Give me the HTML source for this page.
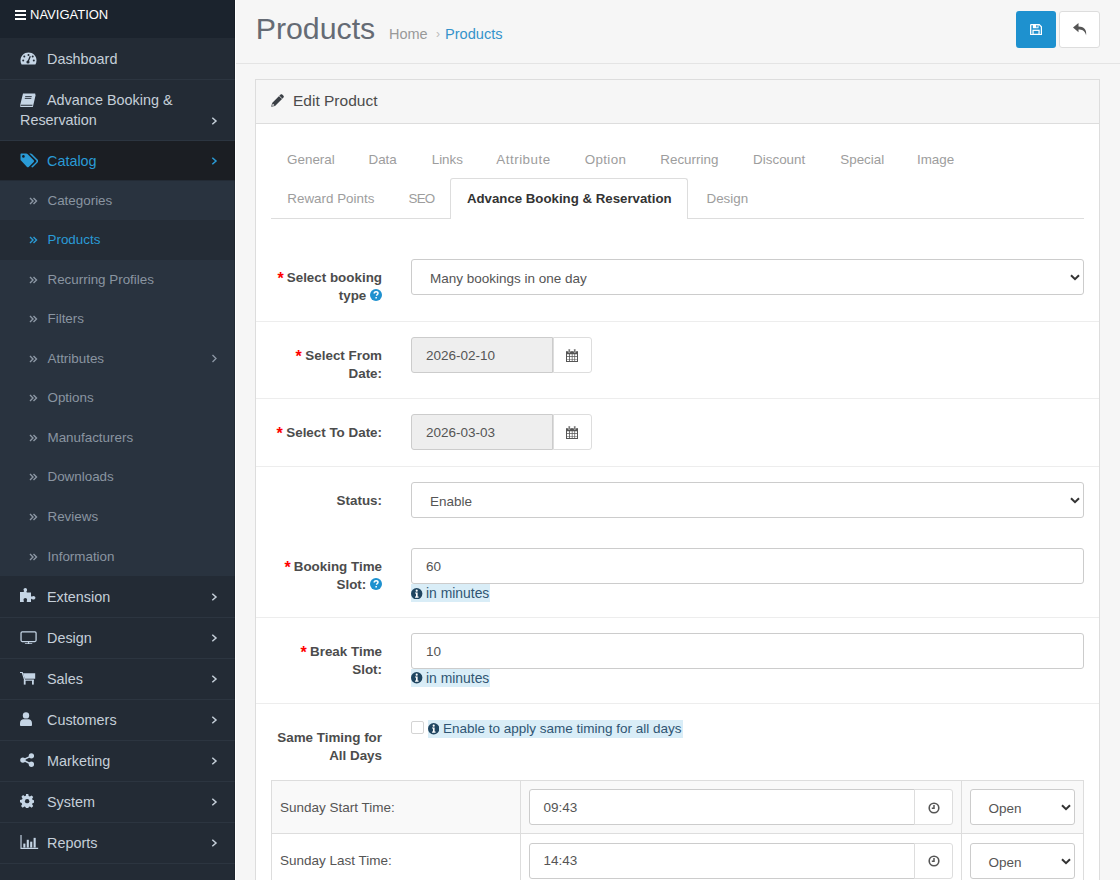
<!DOCTYPE html>
<html><head><meta charset="utf-8">
<style>
*{box-sizing:border-box;}
html,body{margin:0;padding:0;}
body{width:1120px;height:880px;overflow:hidden;background:#f6f6f6;font-family:"Liberation Sans",sans-serif;font-size:13.5px;color:#666;position:relative;}
svg{display:block;}
.ab{position:absolute;white-space:nowrap;}
.lbl{font-weight:bold;font-size:13.4px;line-height:18px;color:#4c4c4c;text-align:right;}
.req{color:#f00;display:inline-block;transform:translateY(1.5px) scale(1.2);}
.fc{position:absolute;background:#fff;border:1px solid #ccc;border-radius:3px;}
.ro{background:#eee;border-radius:3px 0 0 3px;}
.btnw{position:absolute;background:#fff;border:1px solid #ddd;border-radius:0 3px 3px 0;}
.ctl{font-size:13.5px;line-height:18px;color:#555;}
.sep{position:absolute;left:256px;width:843px;height:1px;background:#ededed;}
.hlt{line-height:18px;color:#2f5573;}
.tab{font-size:13.4px;line-height:18px;color:#9d9d9d;}
#left{position:absolute;left:0;top:0;width:235px;height:880px;background:#232b35;}
#navhead{position:absolute;left:0;top:0;width:235px;height:38px;background:#1b232d;color:#fff;font-size:13px;}
#navhead .t{position:absolute;left:30px;top:7px;line-height:16px;}
#navhead .bars{position:absolute;left:15px;top:10px;width:11px;}
#navhead .bars i{display:block;height:2px;background:#fff;margin-bottom:2px;}
.mi{position:absolute;left:0;width:235px;border-bottom:1px solid #2c3540;color:#c5cfd9;font-size:14.4px;line-height:20px;background:#232b35;}
.mi .ic{position:absolute;left:20px;}
.mi .tx{position:absolute;left:47px;top:10.8px;white-space:nowrap;}
.mi .chev{position:absolute;left:211px;}
.mi.b .tx{top:10px;}
.mi.b .chev{margin-top:-0.5px;}
.mi.act{background:#1b1e23;color:#2a9bd6;border-bottom-color:#1b1e23;}
.si{position:absolute;left:0;width:235px;height:39.57px;background:#29333f;color:#8a95a1;font-size:13.4px;line-height:18px;}
.si .tx{position:absolute;left:47.5px;top:11px;white-space:nowrap;}
.si .ic{position:absolute;left:29.3px;top:16px;}
.si .chev{position:absolute;left:211px;top:15px;}
.si.act{background:#242c36;color:#2a9bd6;}
#content{position:absolute;left:235px;top:0;width:885px;height:880px;background:#f6f6f6;border-left:1px solid #fff;}
</style></head><body>
<div id="left">
  <div id="navhead"><div class="bars"><i></i><i></i><i></i></div><div class="t">NAVIGATION</div></div>

  <div class="mi" style="top:38.3px;height:41.3px;">
    <svg class="ic" style="top:14.2px;left:19.5px" width="17" height="13" viewBox="0 0 17 13"><path d="M8.5 0.5C4 0.5 0.5 4 0.5 8.5c0 1.5.4 2.9 1.1 4h13.8c.7-1.1 1.1-2.5 1.1-4C16.5 4 13 .5 8.5.5z" fill="#c5d5e5"/><circle cx="3.2" cy="8.5" r="1" fill="#232b35"/><circle cx="4.3" cy="4.6" r="1" fill="#232b35"/><circle cx="8.5" cy="3" r="1" fill="#232b35"/><circle cx="13.8" cy="8.5" r="1" fill="#232b35"/><circle cx="12.7" cy="4.6" r="1" fill="#232b35"/><path d="M10.3 4.2L8.2 9.3" stroke="#232b35" stroke-width="1.3"/><circle cx="8" cy="10" r="1.6" fill="#232b35"/></svg>
    <div class="tx">Dashboard</div>
  </div>
  <div class="mi" style="top:79.6px;height:61.1px;">
    <svg class="ic" style="top:13.5px" width="16" height="14" viewBox="0 0 16 14"><path d="M3 0.5h12.3l-2.6 11.2H1.2c-.6 0-.9.6-.5 1h11.6l2.8-11.4.6.5-2.9 12.5H1C.2 13.8-.2 12.8.2 12L3 .5z" fill="#c5d5e5"/><path d="M3.6 1.8h10.2l-2.2 8.9H1.6z" fill="#c5d5e5"/><path d="M5.2 3.6h6.5M4.8 5.4h6.5" stroke="#232b35" stroke-width=".9"/></svg>
    <div class="tx">Advance Booking &amp;</div>
    <div class="tx" style="left:20px;top:30.4px">Reservation</div>
    <svg class="chev" style="top:37.4px" width="7" height="8" viewBox="0 0 7 8"><path d="M1.3 .8L5 4 1.3 7.2" stroke="#c5cfd9" stroke-width="1.5" fill="none"/></svg>
  </div>
  <div class="mi act" style="top:140.7px;height:39.8px;">
    <svg class="ic" style="top:12.5px" width="18" height="15" viewBox="0 0 18 15"><path d="M0.5 1.2C0.5.8.8.5 1.2.5h5.1c.4 0 .9.2 1.2.5l6.2 6.2c.5.5.5 1.2 0 1.7L8.7 13.9c-.5.5-1.2.5-1.7 0L1 7.6C.7 7.3.5 6.8.5 6.4z" fill="#2a9bd6"/><circle cx="3.4" cy="3.4" r="1.3" fill="#1b1e23"/><path d="M9.2.5h1.6c.4 0 .9.2 1.2.5l6.2 6.2c.5.5.5 1.2 0 1.7l-5.1 5.1c-.5.5-1.2.5-1.7 0l-.2-.2 4.9-4.9c.5-.5.5-1.2 0-1.7z" fill="#2a9bd6"/></svg>
    <div class="tx">Catalog</div>
    <svg class="chev" style="top:16.8px" width="7" height="8" viewBox="0 0 7 8"><path d="M1.3 .8L5 4 1.3 7.2" stroke="#2a9bd6" stroke-width="1.5" fill="none"/></svg>
  </div>
  <div class="si" style="top:180.50px"><svg class="ic" width="9" height="8" viewBox="0 0 9 8"><path d="M1 1l3 3-3 3M4.5 1l3 3-3 3" stroke="#8d98a5" stroke-width="1.4" fill="none"/></svg><div class="tx">Categories</div></div>
  <div class="si act" style="top:220.07px"><svg class="ic" width="9" height="8" viewBox="0 0 9 8"><path d="M1 1l3 3-3 3M4.5 1l3 3-3 3" stroke="#2a9bd6" stroke-width="1.4" fill="none"/></svg><div class="tx">Products</div></div>
  <div class="si" style="top:259.64px"><svg class="ic" width="9" height="8" viewBox="0 0 9 8"><path d="M1 1l3 3-3 3M4.5 1l3 3-3 3" stroke="#8d98a5" stroke-width="1.4" fill="none"/></svg><div class="tx">Recurring Profiles</div></div>
  <div class="si" style="top:299.21px"><svg class="ic" width="9" height="8" viewBox="0 0 9 8"><path d="M1 1l3 3-3 3M4.5 1l3 3-3 3" stroke="#8d98a5" stroke-width="1.4" fill="none"/></svg><div class="tx">Filters</div></div>
  <div class="si" style="top:338.78px"><svg class="ic" width="9" height="8" viewBox="0 0 9 8"><path d="M1 1l3 3-3 3M4.5 1l3 3-3 3" stroke="#8d98a5" stroke-width="1.4" fill="none"/></svg><div class="tx">Attributes</div><svg class="chev" width="7" height="9" viewBox="0 0 7 9"><path d="M1.5 1l3.5 3.5L1.5 8" stroke="#8d98a5" stroke-width="1.3" fill="none"/></svg></div>
  <div class="si" style="top:378.35px"><svg class="ic" width="9" height="8" viewBox="0 0 9 8"><path d="M1 1l3 3-3 3M4.5 1l3 3-3 3" stroke="#8d98a5" stroke-width="1.4" fill="none"/></svg><div class="tx">Options</div></div>
  <div class="si" style="top:417.92px"><svg class="ic" width="9" height="8" viewBox="0 0 9 8"><path d="M1 1l3 3-3 3M4.5 1l3 3-3 3" stroke="#8d98a5" stroke-width="1.4" fill="none"/></svg><div class="tx">Manufacturers</div></div>
  <div class="si" style="top:457.49px"><svg class="ic" width="9" height="8" viewBox="0 0 9 8"><path d="M1 1l3 3-3 3M4.5 1l3 3-3 3" stroke="#8d98a5" stroke-width="1.4" fill="none"/></svg><div class="tx">Downloads</div></div>
  <div class="si" style="top:497.06px"><svg class="ic" width="9" height="8" viewBox="0 0 9 8"><path d="M1 1l3 3-3 3M4.5 1l3 3-3 3" stroke="#8d98a5" stroke-width="1.4" fill="none"/></svg><div class="tx">Reviews</div></div>
  <div class="si" style="top:536.63px"><svg class="ic" width="9" height="8" viewBox="0 0 9 8"><path d="M1 1l3 3-3 3M4.5 1l3 3-3 3" stroke="#8d98a5" stroke-width="1.4" fill="none"/></svg><div class="tx">Information</div></div>
  <div class="mi b" style="top:577.0px;height:41px;"><svg class="ic" style="top:11.1px" width="16" height="14" viewBox="0 0 16 14"><path d="M0 4h3.5c.5 0 .8-.4.6-.9-.3-.6-.6-1-.6-1.6C3.5 1 4.3 0 5.3 0s1.8 1 1.8 1.9c0 .6-.3 1-.6 1.6-.2.5.1.9.6.9H11v3.5c0 .5.4.8.9.6.6-.3 1-.6 1.6-.6.9 0 1.9.8 1.9 1.8s-1 1.8-1.9 1.8c-.6 0-1-.3-1.6-.6-.5-.2-.9.1-.9.6V14H7.3c-.5 0-.8-.4-.6-.9.2-.4.4-.8.4-1.2 0-1-.8-1.8-1.8-1.8s-1.8.8-1.8 1.8c0 .4.2.8.4 1.2.2.5-.1.9-.6.9H0z" fill="#c5d5e5"/></svg><div class="tx">Extension</div><svg class="chev" style="top:16.8px" width="7" height="8" viewBox="0 0 7 8"><path d="M1.3 .8L5 4 1.3 7.2" stroke="#c5cfd9" stroke-width="1.5" fill="none"/></svg></div>
  <div class="mi b" style="top:618.0px;height:41px;"><svg class="ic" style="top:12.6px" width="17.5" height="13.5" viewBox="0 0 18 14"><rect x="1" y="0.9" width="15.6" height="10" rx="1.2" stroke="#c5d5e5" stroke-width="1.3" fill="none"/><path d="M8.8 11v2M5 13.3h7.6" stroke="#c5d5e5" stroke-width="1.2"/></svg><div class="tx">Design</div><svg class="chev" style="top:16.8px" width="7" height="8" viewBox="0 0 7 8"><path d="M1.3 .8L5 4 1.3 7.2" stroke="#c5cfd9" stroke-width="1.5" fill="none"/></svg></div>
  <div class="mi b" style="top:659.0px;height:41px;"><svg class="ic" style="top:13.2px" width="16" height="13" viewBox="0 0 16 13"><path d="M0 .4h2.2l2.5 7.8h9.2" stroke="#c5d5e5" stroke-width="1.2" fill="none"/><path d="M3 1.3h12.2v5.5H4.8z" fill="#c5d5e5"/><rect x="3.8" y="8" width="1.8" height="4.6" fill="#c5d5e5"/><rect x="12" y="8" width="1.8" height="4.6" fill="#c5d5e5"/></svg><div class="tx">Sales</div><svg class="chev" style="top:16.8px" width="7" height="8" viewBox="0 0 7 8"><path d="M1.3 .8L5 4 1.3 7.2" stroke="#c5cfd9" stroke-width="1.5" fill="none"/></svg></div>
  <div class="mi b" style="top:700.0px;height:41px;"><svg class="ic" style="top:12.1px" width="12" height="14" viewBox="0 0 12 14"><circle cx="6" cy="3.4" r="3.2" fill="#c5d5e5"/><path d="M0 11.2C0 8.8 1.7 7.3 3.4 7.3h5.2c1.7 0 3.4 1.5 3.4 3.9V13c0 .5-.4 1-1 1H1c-.6 0-1-.5-1-1z" fill="#c5d5e5"/></svg><div class="tx">Customers</div><svg class="chev" style="top:16.8px" width="7" height="8" viewBox="0 0 7 8"><path d="M1.3 .8L5 4 1.3 7.2" stroke="#c5cfd9" stroke-width="1.5" fill="none"/></svg></div>
  <div class="mi b" style="top:741.0px;height:41px;"><svg class="ic" style="top:11.8px" width="14.3" height="14.3" viewBox="0 0 15 15"><circle cx="12" cy="3" r="2.8" fill="#c5d5e5"/><circle cx="3" cy="7.4" r="2.8" fill="#c5d5e5"/><circle cx="12" cy="11.8" r="2.8" fill="#c5d5e5"/><path d="M12 3L3 7.4l9 4.4" stroke="#c5d5e5" stroke-width="1.6" fill="none"/></svg><div class="tx">Marketing</div><svg class="chev" style="top:16.8px" width="7" height="8" viewBox="0 0 7 8"><path d="M1.3 .8L5 4 1.3 7.2" stroke="#c5cfd9" stroke-width="1.5" fill="none"/></svg></div>
  <div class="mi b" style="top:782.0px;height:41px;"><svg class="ic" style="top:12.0px" width="14.3" height="14.3" viewBox="0 0 15 15"><path d="M6.3 0h2.4l.4 2.1 1.3.6 1.8-1.2 1.7 1.7-1.2 1.8.6 1.3 2.1.4v2.4l-2.1.4-.6 1.3 1.2 1.8-1.7 1.7-1.8-1.2-1.3.6-.4 2.1H6.3l-.4-2.1-1.3-.6-1.8 1.2-1.7-1.7 1.2-1.8-.6-1.3L0 8.7V6.3l2.1-.4.6-1.3-1.2-1.8 1.7-1.7 1.8 1.2 1.3-.6z" fill="#c5d5e5"/><circle cx="7.5" cy="7.5" r="2.3" fill="#232b35"/></svg><div class="tx">System</div><svg class="chev" style="top:16.8px" width="7" height="8" viewBox="0 0 7 8"><path d="M1.3 .8L5 4 1.3 7.2" stroke="#c5cfd9" stroke-width="1.5" fill="none"/></svg></div>
  <div class="mi b" style="top:823.0px;height:41px;"><svg class="ic" style="top:11.8px" width="19" height="14.3" viewBox="0 0 19 15"><path d="M.6 0v14.1h18" stroke="#c5d5e5" stroke-width="1.2" fill="none"/><rect x="3" y="9" width="2.2" height="4.2" fill="#c5d5e5"/><rect x="6.6" y="5" width="2.2" height="8.2" fill="#c5d5e5"/><rect x="10.2" y="7" width="2.2" height="6.2" fill="#c5d5e5"/><rect x="13.8" y="3" width="2.2" height="10.2" fill="#c5d5e5"/></svg><div class="tx">Reports</div><svg class="chev" style="top:16.8px" width="7" height="8" viewBox="0 0 7 8"><path d="M1.3 .8L5 4 1.3 7.2" stroke="#c5cfd9" stroke-width="1.5" fill="none"/></svg></div>
</div>
<div id="hdrline" style="position:absolute;left:236px;top:63px;width:884px;height:1px;background:#e4e4e4"></div>
<div style="position:absolute;left:235px;top:0;width:1px;height:880px;background:#fff"></div>
<div style="position:absolute;left:234px;top:0;width:1px;height:880px;background:rgba(0,0,0,0.15)"></div>
<div class="ab" style="left:255.7px;top:12px;font-size:30.3px;line-height:34px;color:#656b74">Products</div>
<div class="ab" style="left:389px;top:25px;font-size:14.5px;line-height:18px;color:#999">Home</div>
<div class="ab" style="left:436px;top:25px;font-size:12px;line-height:18px;color:#bbb">›</div>
<div class="ab" style="left:445px;top:25px;font-size:14.6px;line-height:18px;color:#3593cb">Products</div>
<div class="ab" style="left:1016px;top:11px;width:40px;height:36.6px;background:#1e91cf;border-radius:3px;">
  <svg style="position:absolute;left:13.5px;top:12.6px" width="12.3" height="11.3" viewBox="0 0 13 12"><path d="M1.2.7h8.6l2.3 2.3v7.7c0 .4-.3.7-.7.7H1.2c-.3 0-.5-.3-.5-.6V1.3c0-.3.2-.6.5-.6z" stroke="#fff" stroke-width="1.4" fill="none"/><rect x="3" y="0.5" width="6" height="4" fill="#fff"/><rect x="6.6" y="1.2" width="1.4" height="2.4" fill="#1e91cf"/><rect x="3.2" y="6.7" width="6.4" height="4.3" stroke="#fff" stroke-width="1.3" fill="none"/></svg>
</div>
<div class="ab" style="left:1059px;top:11px;width:41px;height:36.6px;background:#fff;border:1px solid #ddd;border-radius:3px;">
  <svg style="position:absolute;left:12.5px;top:11px" width="14" height="13" viewBox="0 0 14 13"><path d="M5.5 0L0 4.6l5.5 4.6V6.4c3.4 0 6.2.6 7.6 5.8.9-5.8-2.4-8.8-7.6-8.8z" fill="#555"/></svg>
</div>
<div id="panel" style="position:absolute;left:255px;top:79px;width:845px;height:820px;border:1px solid #ddd;background:#fff;">
  <div style="position:absolute;left:0;top:0;width:843px;height:43.5px;background:#f6f6f6;border-bottom:1px solid #ddd"></div>
</div>
<svg style="position:absolute;left:271px;top:94.3px" width="13" height="13" viewBox="0 0 13 13"><path d="M9.6.5c.5-.5 1.1-.5 1.6 0l1.3 1.3c.5.5.5 1.1 0 1.6L4 11.9.2 12.8l.9-3.8z" fill="#3a3f45"/><path d="M8.2 1.9l2.9 2.9" stroke="#f6f6f6" stroke-width=".8"/><path d="M1.7 9.5l1.8 1.8-2.3.6z" fill="#f6f6f6"/></svg>
<div class="ab" style="left:293px;top:92px;font-size:15.5px;line-height:18px;color:#4c4c4c">Edit Product</div>
<div style="position:absolute;left:271px;top:218px;width:813px;height:1px;background:#ddd"></div>
<div style="position:absolute;left:450px;top:178px;width:238px;height:41px;background:#fff;border:1px solid #ddd;border-bottom:none;border-radius:3px 3px 0 0"></div>
<div class="ab tab" style="left:287.1px;top:150.8px">General</div>
<div class="ab tab" style="left:368.5px;top:150.8px">Data</div>
<div class="ab tab" style="left:431.7px;top:150.8px">Links</div>
<div class="ab tab" style="left:496.3px;top:150.8px;letter-spacing:0.5px">Attribute</div>
<div class="ab tab" style="left:584.7px;top:150.8px;letter-spacing:0.35px">Option</div>
<div class="ab tab" style="left:660.3px;top:150.8px">Recurring</div>
<div class="ab tab" style="left:753.1px;top:150.8px">Discount</div>
<div class="ab tab" style="left:840.3px;top:150.8px">Special</div>
<div class="ab tab" style="left:917.0px;top:150.8px">Image</div>
<div class="ab tab" style="left:287.3px;top:189.8px">Reward Points</div>
<div class="ab tab" style="left:408.6px;top:189.8px;letter-spacing:-0.9px">SEO</div>
<div class="ab tab" style="left:706.5px;top:189.8px">Design</div>
<div class="ab tab" style="left:466.9px;top:189.8px;color:#333;font-weight:bold;font-size:13.25px">Advance Booking &amp; Reservation</div>
<div class="ab lbl" style="right:738px;top:269px"><span class="req">*</span> Select booking</div>
<div class="ab lbl" style="right:738px;top:287px">type <svg width="12" height="12" viewBox="0 0 12 12" style="display:inline-block;vertical-align:-1px"><circle cx="6" cy="6" r="6" fill="#1e91cf"/><path d="M4.2 4.5c0-1.1.8-1.8 1.9-1.8s1.9.7 1.9 1.6c0 1.2-1.4 1.3-1.4 2.4" stroke="#fff" stroke-width="1.5" fill="none"/><rect x="5.4" y="8" width="1.5" height="1.5" fill="#fff"/></svg></div>
<div class="fc" style="left:411px;top:259px;width:673px;height:36px;"><div class="ab ctl" style="left:18px;top:10px">Many bookings in one day</div><div class="ab" style="right:3.5px;top:14px"><svg width="10" height="7" viewBox="0 0 10 7"><path d="M1 1.2l4 4 4-4" stroke="#333" stroke-width="2" fill="none"/></svg></div></div>
<div class="sep" style="top:321px"></div>
<div class="ab lbl" style="right:738px;top:347px"><span class="req">*</span> Select From</div>
<div class="ab lbl" style="right:738px;top:365px">Date:</div>
<div class="fc ro" style="left:411px;top:337px;width:142px;height:36px;"><div class="ab ctl" style="left:14px;top:9px">2026-02-10</div></div>
<div class="btnw" style="left:552.5px;top:337px;width:39.5px;height:36px;"><div class="ab" style="left:12.6px;top:11.3px"><svg width="12" height="13" viewBox="0 0 12 13"><rect x="0" y="2.2" width="12" height="10.8" fill="#555"/><path d="M1 5.3h2.1v2h-2.1zM3.9 5.3h1.9v2H3.9zM6.5 5.3h1.9v2H6.5zM9.1 5.3H11v2H9.1zM1 8h2.1v1.9H1zM3.9 8h1.9v1.9H3.9zM6.5 8h1.9v1.9H6.5zM9.1 8H11v1.9H9.1zM1 10.6h2.1V12H1zM3.9 10.6h1.9V12H3.9zM6.5 10.6h1.9V12H6.5zM9.1 10.6H11V12H9.1z" fill="#fff"/><rect x="2.3" y="0" width="1.8" height="3.4" rx=".5" fill="#555" stroke="#fff" stroke-width=".5"/><rect x="7.9" y="0" width="1.8" height="3.4" rx=".5" fill="#555" stroke="#fff" stroke-width=".5"/></svg></div></div>
<div class="sep" style="top:398px"></div>
<div class="ab lbl" style="right:738px;top:424px"><span class="req">*</span> Select To Date:</div>
<div class="fc ro" style="left:411px;top:414px;width:142px;height:36px;"><div class="ab ctl" style="left:14px;top:9px">2026-03-03</div></div>
<div class="btnw" style="left:552.5px;top:414px;width:39.5px;height:36px;"><div class="ab" style="left:12.6px;top:11.3px"><svg width="12" height="13" viewBox="0 0 12 13"><rect x="0" y="2.2" width="12" height="10.8" fill="#555"/><path d="M1 5.3h2.1v2h-2.1zM3.9 5.3h1.9v2H3.9zM6.5 5.3h1.9v2H6.5zM9.1 5.3H11v2H9.1zM1 8h2.1v1.9H1zM3.9 8h1.9v1.9H3.9zM6.5 8h1.9v1.9H6.5zM9.1 8H11v1.9H9.1zM1 10.6h2.1V12H1zM3.9 10.6h1.9V12H3.9zM6.5 10.6h1.9V12H6.5zM9.1 10.6H11V12H9.1z" fill="#fff"/><rect x="2.3" y="0" width="1.8" height="3.4" rx=".5" fill="#555" stroke="#fff" stroke-width=".5"/><rect x="7.9" y="0" width="1.8" height="3.4" rx=".5" fill="#555" stroke="#fff" stroke-width=".5"/></svg></div></div>
<div class="sep" style="top:466px"></div>
<div class="ab lbl" style="right:738px;top:492px">Status:</div>
<div class="fc" style="left:411px;top:482px;width:673px;height:36px;"><div class="ab ctl" style="left:18px;top:10px">Enable</div><div class="ab" style="right:3.5px;top:14px"><svg width="10" height="7" viewBox="0 0 10 7"><path d="M1 1.2l4 4 4-4" stroke="#333" stroke-width="2" fill="none"/></svg></div></div>
<div class="ab lbl" style="right:738px;top:558px"><span class="req">*</span> Booking Time</div>
<div class="ab lbl" style="right:738px;top:576px">Slot: <svg width="12" height="12" viewBox="0 0 12 12" style="display:inline-block;vertical-align:-1px"><circle cx="6" cy="6" r="6" fill="#1e91cf"/><path d="M4.2 4.5c0-1.1.8-1.8 1.9-1.8s1.9.7 1.9 1.6c0 1.2-1.4 1.3-1.4 2.4" stroke="#fff" stroke-width="1.5" fill="none"/><rect x="5.4" y="8" width="1.5" height="1.5" fill="#fff"/></svg></div>
<div class="fc" style="left:411px;top:548px;width:673px;height:36px;"><div class="ab ctl" style="left:14px;top:9px">60</div></div>
<div class="ab" style="left:411px;top:583.7px;width:78.8px;height:18.2px;background:#d9edf7"></div><div class="ab" style="left:411.4px;top:587.6px"><svg width="11.4" height="11.4" viewBox="0 0 11 11"><circle cx="5.5" cy="5.5" r="5.5" fill="#1f4560"/><path d="M3.9 4.3h2.5v3.9h.9v1.1H3.9V8.2h.9V5.4h-.9z" fill="#fff"/><circle cx="5.5" cy="2.6" r="1.05" fill="#fff"/></svg></div><div class="ab hlt" style="left:426px;top:584.3px;font-size:13.9px">in minutes</div>
<div class="sep" style="top:617px"></div>
<div class="ab lbl" style="right:738px;top:643px"><span class="req">*</span> Break Time</div>
<div class="ab lbl" style="right:738px;top:661px">Slot:</div>
<div class="fc" style="left:411px;top:633px;width:673px;height:36px;"><div class="ab ctl" style="left:14px;top:9px">10</div></div>
<div class="ab" style="left:411px;top:668.5px;width:78.8px;height:18.0px;background:#d9edf7"></div><div class="ab" style="left:411.4px;top:672.4px"><svg width="11.4" height="11.4" viewBox="0 0 11 11"><circle cx="5.5" cy="5.5" r="5.5" fill="#1f4560"/><path d="M3.9 4.3h2.5v3.9h.9v1.1H3.9V8.2h.9V5.4h-.9z" fill="#fff"/><circle cx="5.5" cy="2.6" r="1.05" fill="#fff"/></svg></div><div class="ab hlt" style="left:426px;top:669.4px;font-size:13.9px">in minutes</div>
<div class="sep" style="top:703px"></div>
<div class="ab lbl" style="right:738px;top:729px">Same Timing for</div>
<div class="ab lbl" style="right:738px;top:747px">All Days</div>
<div class="ab" style="left:411px;top:721px;width:13px;height:13px;border:1px solid #d4d4d4;border-radius:2px;background:#fff"></div>
<div class="ab" style="left:428px;top:720px;width:255.0px;height:17.7px;background:#d9edf7"></div><div class="ab" style="left:427.8px;top:723.3px"><svg width="11.4" height="11.4" viewBox="0 0 11 11"><circle cx="5.5" cy="5.5" r="5.5" fill="#1f4560"/><path d="M3.9 4.3h2.5v3.9h.9v1.1H3.9V8.2h.9V5.4h-.9z" fill="#fff"/><circle cx="5.5" cy="2.6" r="1.05" fill="#fff"/></svg></div><div class="ab hlt" style="left:443px;top:720.4px;font-size:13.5px">Enable to apply same timing for all days</div>
<div class="ab" style="left:271px;top:780px;width:813px;height:110px;border:1px solid #ddd;border-bottom:none"></div>
<div class="ab" style="left:272px;top:781px;width:811px;height:52.5px;background:#f9f9f9"></div>
<div class="ab" style="left:271px;top:833px;width:813px;height:1px;background:#ddd"></div>
<div class="ab" style="left:520px;top:780px;width:1px;height:110px;background:#ddd"></div>
<div class="ab" style="left:961px;top:780px;width:1px;height:110px;background:#ddd"></div>
<div class="ab ctl" style="left:280px;top:799.4px;color:#555">Sunday Start Time:</div>
<div class="fc" style="left:529px;top:789.4px;width:386px;height:36px;border-radius:3px 0 0 3px"><div class="ab ctl" style="left:13.5px;top:8.3px">09:43</div></div>
<div class="btnw" style="left:914px;top:789.4px;width:39px;height:36px;"><div class="ab" style="left:12.5px;top:11.5px"><svg width="12" height="12" viewBox="0 0 12 12"><circle cx="6" cy="6" r="4.8" stroke="#555" stroke-width="1.6" fill="none"/><path d="M6 3v3.3H3.8" stroke="#555" stroke-width="1.5" fill="none"/></svg></div></div>
<div class="fc" style="left:970px;top:789.4px;width:105px;height:36px;"><div class="ab ctl" style="left:17.5px;top:10px">Open</div><div class="ab" style="right:3px;top:14px"><svg width="10" height="7" viewBox="0 0 10 7"><path d="M1 1.2l4 4 4-4" stroke="#333" stroke-width="2" fill="none"/></svg></div></div>
<div class="ab ctl" style="left:280px;top:851.5px;color:#555">Sunday Last Time:</div>
<div class="fc" style="left:529px;top:842.5px;width:386px;height:36px;border-radius:3px 0 0 3px"><div class="ab ctl" style="left:13.5px;top:8px">14:43</div></div>
<div class="btnw" style="left:914px;top:842.5px;width:39px;height:36px;"><div class="ab" style="left:12.5px;top:11.5px"><svg width="12" height="12" viewBox="0 0 12 12"><circle cx="6" cy="6" r="4.8" stroke="#555" stroke-width="1.6" fill="none"/><path d="M6 3v3.3H3.8" stroke="#555" stroke-width="1.5" fill="none"/></svg></div></div>
<div class="fc" style="left:970px;top:842.5px;width:105px;height:36px;"><div class="ab ctl" style="left:17.5px;top:10px">Open</div><div class="ab" style="right:3px;top:14px"><svg width="10" height="7" viewBox="0 0 10 7"><path d="M1 1.2l4 4 4-4" stroke="#333" stroke-width="2" fill="none"/></svg></div></div>
</body></html>
